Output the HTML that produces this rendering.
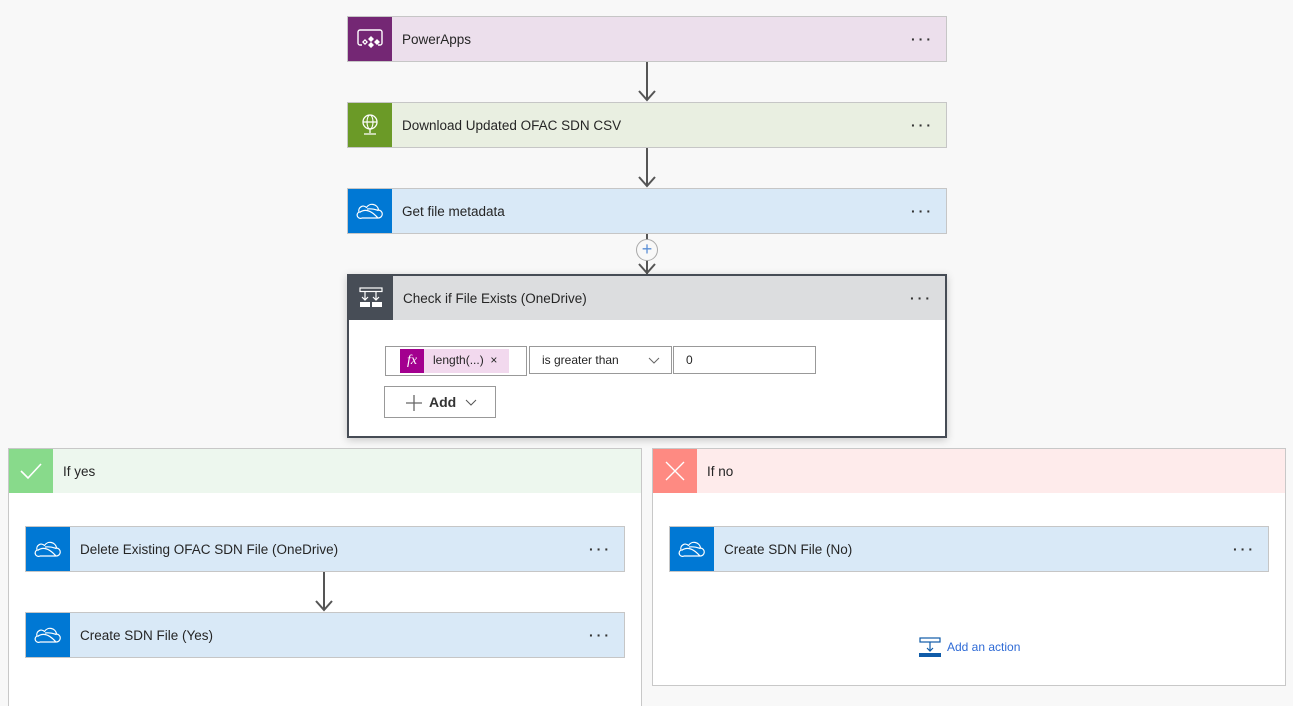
<!DOCTYPE html>
<html style="overflow:hidden;width:1293px;height:706px"><head><meta charset="utf-8"><style>
*{box-sizing:border-box;margin:0;padding:0}
body{width:1293px;height:706px;background:#f8f8f8;position:relative;overflow:hidden;font-family:"Liberation Sans",sans-serif;font-size:13.5px;color:#252525}
.a{position:absolute}
.card{position:absolute;height:46px;border:1px solid #c6c6c6;display:flex;align-items:center}
.ic{width:44px;height:44px;display:flex;align-items:center;justify-content:center;flex:none}
.t{padding-left:10px;flex:1}
.dots{position:absolute;right:12px;top:15px;font-size:14px;letter-spacing:3px;color:#333;font-weight:bold;line-height:14px}
.vline{position:absolute;width:2px;background:#555}
</style></head><body>
<svg width="0" height="0" style="position:absolute"><defs>
<symbol id="cloud" viewBox="0 0 28 20"><path d="M6 17 H22 a4 4 0 0 0 0.5-8 a6.5 6.5 0 0 0-12-2.5 a4.5 4.5 0 0 0-7.5 4.5 A3.2 3.2 0 0 0 6 17 Z M3.5 11.5 C8 8 14 8 22 17 M11 8 C14 7.5 18 8 22.5 9.5" fill="none" stroke="#fff" stroke-width="1.2" stroke-linejoin="round"/></symbol>
<symbol id="arrow" viewBox="0 0 20 14"><path d="M2 3 L10 12 L18 3" fill="none" stroke="#555" stroke-width="2"/></symbol>
</defs></svg>

<div class="card" style="left:347px;top:16px;width:600px;background:#ecdfec">
<div class="ic" style="background:#742774"><svg width="28" height="22" viewBox="0 0 28 22"><path d="M6 17 H4 a2 2 0 0 1-2-2 V4 a2 2 0 0 1 2-2 H24 a2 2 0 0 1 2 2 V15 a2 2 0 0 1-2 2 H22" fill="none" stroke="#fff" stroke-width="1.4"/><path d="M6 14 l3-3 3 3-3 3z M12 11 l3-3 3 3-3 3z M12 17 l3-3 3 3-3 3z M18 14 l3-3 3 3-3 3z" fill="#fff"/><circle cx="9" cy="14" r="1" fill="#742774"/></svg></div>
<div class="t">PowerApps</div><div class="dots">···</div></div>
<div class="vline" style="left:646px;top:62px;height:38px"></div>
<svg class="a" style="left:637px;top:88px" width="20" height="14"><use href="#arrow"/></svg>

<div class="card" style="left:347px;top:102px;width:600px;background:#e9efe1">
<div class="ic" style="background:#6b9a27"><svg width="22" height="26" viewBox="0 0 22 26"><circle cx="11" cy="10" r="7" fill="none" stroke="#fff" stroke-width="1.3"/><ellipse cx="11" cy="10" rx="3" ry="7" fill="none" stroke="#fff" stroke-width="1.1"/><path d="M4 10h14M11 17v4M5 22h12" stroke="#fff" stroke-width="1.3"/></svg></div>
<div class="t">Download Updated OFAC SDN CSV</div><div class="dots">···</div></div>
<div class="vline" style="left:646px;top:148px;height:38px"></div>
<svg class="a" style="left:637px;top:174px" width="20" height="14"><use href="#arrow"/></svg>

<div class="card" style="left:347px;top:188px;width:600px;background:#d9e9f7">
<div class="ic" style="background:#0078d4"><svg width="28" height="20"><use href="#cloud"/></svg></div>
<div class="t">Get file metadata</div><div class="dots">···</div></div>
<div class="vline" style="left:646px;top:234px;height:40px"></div>
<div class="a" style="left:636px;top:239px;width:22px;height:22px;border-radius:50%;border:1px solid #aaa;background:#f8f8f8;color:#5b8fd6;font-size:18px;line-height:19px;text-align:center">+</div>
<svg class="a" style="left:637px;top:261px" width="20" height="14"><use href="#arrow"/></svg>

<div class="a" style="left:347px;top:274px;width:600px;height:164px;border:2px solid #464c55;background:#fff;box-shadow:0 2px 8px rgba(0,0,0,.2)">
<div style="height:44px;background:#dcdddf;display:flex;align-items:center">
<div style="width:44px;height:44px;background:#474d56;display:flex;align-items:center;justify-content:center"><svg width="24" height="22" viewBox="0 0 24 22"><rect x="1" y="1" width="22" height="3.5" fill="none" stroke="#fff" stroke-width="1.2"/><path d="M6 4v9M3 10l3 3 3-3M17 4v9M14 10l3 3 3-3" fill="none" stroke="#fff" stroke-width="1.2"/><rect x="1" y="15" width="10" height="5" fill="#fff"/><rect x="13" y="15" width="10" height="5" fill="#fff"/></svg></div>
<div style="padding-left:10px">Check if File Exists (OneDrive)</div></div>
<div class="dots" style="top:15px;right:12px">···</div>
<div class="a" style="left:36px;top:70px;width:142px;height:30px;border:1px solid #999;background:#fff"></div>
<div class="a" style="left:51px;top:73px;width:24px;height:24px;background:#a3008f;color:#fff;font-family:'Liberation Serif',serif;font-style:italic;font-size:14px;text-align:center;line-height:23px">fx</div>
<div class="a" style="left:75px;top:73px;width:85px;height:24px;background:#f2d9ee;font-size:12px;line-height:23px;padding-left:9px">length(...) &nbsp;×</div>
<div class="a" style="left:180px;top:70px;width:143px;height:28px;border:1px solid #999;font-size:12px;line-height:27px;padding-left:12px">is greater than<svg class="a" style="left:118px;top:10px" width="12" height="8"><path d="M1 1l5 5 5-5" fill="none" stroke="#666"/></svg></div>
<div class="a" style="left:324px;top:70px;width:143px;height:28px;border:1px solid #999;font-size:12px;line-height:26px;padding-left:12px">0</div>
<div class="a" style="left:35px;top:110px;width:112px;height:32px;border:1px solid #999;font-size:14px;font-weight:bold;color:#333;line-height:30px;padding-left:44px">Add<svg class="a" style="left:20px;top:7px" width="18" height="18"><path d="M9 1v16M1 9h16" stroke="#666" stroke-width="1.3"/></svg><svg class="a" style="left:80px;top:12px" width="12" height="8"><path d="M1 1l5 5 5-5" fill="none" stroke="#555"/></svg></div>
</div>

<div class="a" style="left:8px;top:448px;width:634px;height:262px;border:1px solid #c8c8c8;background:#fff">
<div style="height:44px;background:#edf7ee;display:flex;align-items:center">
<div style="width:44px;height:44px;background:#88da8b;display:flex;align-items:center;justify-content:center"><svg width="24" height="18"><path d="M2 9l7 7 13-14" fill="none" stroke="#fff" stroke-width="1.6"/></svg></div>
<div style="padding-left:10px">If yes</div></div></div>
<div class="card" style="left:25px;top:526px;width:600px;background:#d9e9f7">
<div class="ic" style="background:#0078d4"><svg width="28" height="20"><use href="#cloud"/></svg></div>
<div class="t">Delete Existing OFAC SDN File (OneDrive)</div><div class="dots">···</div></div>
<div class="vline" style="left:323px;top:572px;height:38px"></div>
<svg class="a" style="left:314px;top:598px" width="20" height="14"><use href="#arrow"/></svg>
<div class="card" style="left:25px;top:612px;width:600px;background:#d9e9f7">
<div class="ic" style="background:#0078d4"><svg width="28" height="20"><use href="#cloud"/></svg></div>
<div class="t">Create SDN File (Yes)</div><div class="dots">···</div></div>

<div class="a" style="left:652px;top:448px;width:634px;height:238px;border:1px solid #c8c8c8;background:#fff">
<div style="height:44px;background:#feebeb;display:flex;align-items:center">
<div style="width:44px;height:44px;background:#fe8a82;display:flex;align-items:center;justify-content:center"><svg width="20" height="20"><path d="M1 1l18 18M19 1L1 19" stroke="#fff" stroke-width="1.4"/></svg></div>
<div style="padding-left:10px">If no</div></div>
<div class="a" style="left:266px;top:188px;font-size:12px;color:#2f6bd6;display:flex;align-items:center"><svg width="22" height="20" viewBox="0 0 22 20"><rect x="1" y="1" width="20" height="4" fill="none" stroke="#0f5ba8" stroke-width="1.2"/><path d="M11 5v9M8 11l3 3 3-3" fill="none" stroke="#0f5ba8" stroke-width="1.2"/><rect x="0" y="16" width="22" height="4" fill="#0f5ba8"/></svg><span style="margin-left:6px">Add an action</span></div>
</div>
<div class="card" style="left:669px;top:526px;width:600px;background:#d9e9f7">
<div class="ic" style="background:#0078d4"><svg width="28" height="20"><use href="#cloud"/></svg></div>
<div class="t">Create SDN File (No)</div><div class="dots">···</div></div>
</body></html>
